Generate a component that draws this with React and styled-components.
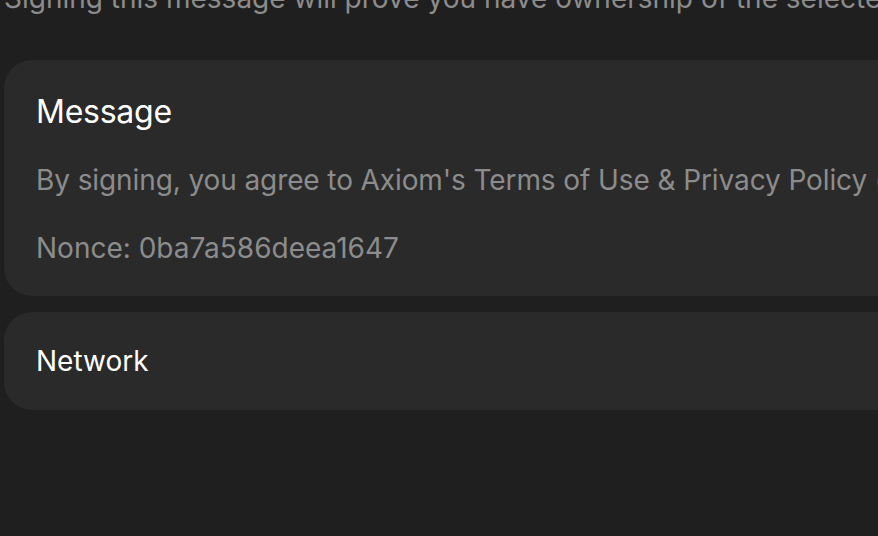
import React from "react";
import styled, { createGlobalStyle } from "styled-components";

const GlobalStyle = createGlobalStyle`
  html, body {
    margin: 0;
    padding: 0;
    background: #1f1f1f;
    overflow: hidden;
  }
  body {
    font-family: Inter, "Noto Sans", "Liberation Sans", sans-serif;
    -webkit-font-smoothing: antialiased;
  }
`;

const Page = styled.main`
  display: flex;
  flex-direction: column;
  width: 1160px;
  padding-left: 4px;
  box-sizing: border-box;
`;

const Intro = styled.p`
  margin: -22px 0 42px;
  font-size: 28px;
  line-height: 40px;
  color: #8c8c8c;
  white-space: nowrap;
`;

const Stack = styled.div`
  display: flex;
  flex-direction: column;
  gap: 16px;
`;

const Card = styled.section`
  display: flex;
  flex-direction: column;
  gap: 28px;
  background: #2a2a2a;
  border-radius: 28px;
  padding: 32px 32px ${(p) => (p.$tight ? "32px" : "28px")};
`;

const Title = styled.h2`
  margin: 0;
  font-weight: 400;
  color: #ffffff;
  font-size: ${(p) => (p.$large ? "32px" : "28px")};
  line-height: ${(p) => (p.$large ? "40px" : "34px")};
  letter-spacing: ${(p) => (p.$large ? "-0.25px" : "0")};
`;

const Line = styled.p`
  margin: 0;
  font-size: 28px;
  line-height: 40px;
  color: #8c8c8c;
  white-space: nowrap;
  letter-spacing: ${(p) => (p.$long ? "-0.1px" : "0")};
`;

export default function App() {
  return (
    <>
      <GlobalStyle />
      <Page>
        <Intro>
          Signing this message will prove you have ownership of the selected account.
        </Intro>
        <Stack>
          <Card>
            <Title $large>Message</Title>
            <Line $long>
              By signing, you agree to Axiom's Terms of Use &amp; Privacy Policy (https://axiom.trade/legal)
            </Line>
            <Line>Nonce: 0ba7a586deea1647</Line>
          </Card>
          <Card $tight>
            <Title>Network</Title>
          </Card>
        </Stack>
      </Page>
    </>
  );
}
